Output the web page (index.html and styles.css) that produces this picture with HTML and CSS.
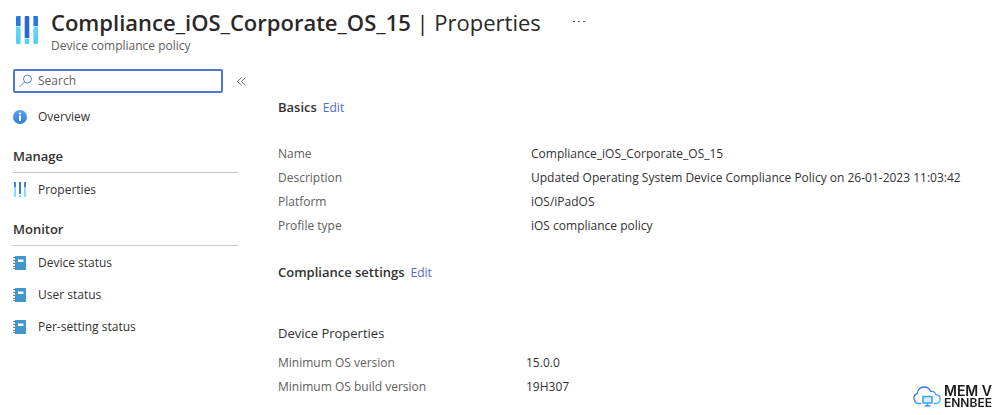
FILE: index.html
```html
<!DOCTYPE html>
<html lang="en">
<head>
<meta charset="utf-8">
<meta name="viewport" content="width=device-width, initial-scale=1">
<title>Compliance_iOS_Corporate_OS_15 | Properties</title>
<link rel="stylesheet" href="styles.css">
</head>
<body>
<svg class="sprite" aria-hidden="true">
  <defs>
    <linearGradient id="cyan" x1="0" y1="0" x2="0" y2="1"><stop offset="0" stop-color="#62d8f5"/><stop offset="1" stop-color="#52cdf2"/></linearGradient>
    <linearGradient id="info" x1="0" y1="0" x2="0" y2="1"><stop offset="0" stop-color="#5ea0ef"/><stop offset="1" stop-color="#2f7de0"/></linearGradient>
    <linearGradient id="cloud" x1="0" y1="0" x2="1" y2="1"><stop offset="0" stop-color="#2f62f0"/><stop offset="1" stop-color="#45b4fa"/></linearGradient>
  </defs>
  <symbol id="bars" viewBox="0 0 22 28">
    <path fill="#2478e0" d="M1 0h3.600v10H0V1a1 1 0 0 1 1-1zM17.400 0H21a1 1 0 0 1 1 1v9h-4.600z"/>
    <path fill="#2c66d4" d="M9.700 0h2.600a1 1 0 0 1 1 1v21H8.700V1a1 1 0 0 1 1-1z"/>
    <path fill="#c5effb" d="M0 10h4.600v1H0zM17.400 10H22v1h-4.600zM8.700 22h4.600v1H8.700z"/>
    <path fill="url(#cyan)" d="M0 11h4.600v16a1 1 0 0 1-1 1H1a1 1 0 0 1-1-1zM17.400 11H22v16a1 1 0 0 1-1 1h-2.600a1 1 0 0 1-1-1zM8.700 23h4.600v4a1 1 0 0 1-1 1H9.700a1 1 0 0 1-1-1z"/>
  </symbol>
  <symbol id="book" viewBox="0 0 14 14">
    <path fill="#3f96cc" d="M2 0h10.500a.5.500 0 0 1 .5.500v13a.5.500 0 0 1-.5.500H2z"/>
    <path fill="#fff" d="M5 3.500h5.500V6H5z"/>
    <path stroke="#6b7f8c" stroke-width="1" d="M0 1.500h3M0 4.500h3M0 7.500h3M0 10.500h3M0 12.500h3"/>
  </symbol>
</svg>

<header class="header">
  <svg class="header-icon" aria-hidden="true"><use href="#bars"/></svg>
  <div>
    <div class="title-row">
      <h1 class="title">Compliance_iOS_Corporate_OS_15 <span class="title-page">| Properties</span></h1>
      <button class="more" type="button" aria-label="More actions">
        <svg class="more-icon" viewBox="0 0 12 2" aria-hidden="true"><path fill="#555" d="M0 0h2v1H0zM5 0h2v1H5zM10 0h2v1h-2z"/></svg>
      </button>
    </div>
    <p class="subtitle">Device compliance policy</p>
  </div>
</header>

<div class="layout">
  <nav class="sidebar" aria-label="Policy menu">
    <div class="search-row">
      <label class="search">
        <svg class="search-icon" viewBox="0 0 14 14" fill="none" stroke="#4f7fdc" aria-hidden="true"><circle cx="8.500" cy="5" r="4"/><path d="M5.600 7.900L1 12.500"/></svg>
        <input class="search-input" type="search" placeholder="Search" aria-label="Search">
      </label>
      <button class="collapse" type="button" aria-label="Collapse menu">
        <svg class="collapse-icon" viewBox="0 0 9 9" fill="none" stroke="#777" aria-hidden="true"><path d="M4.500.5l-4 4 4 4M8.500.5l-4 4 4 4"/></svg>
      </button>
    </div>
    <a class="nav-item" href="#overview">
      <svg class="nav-icon" viewBox="0 0 14 14" aria-hidden="true"><circle cx="7" cy="7" r="7" fill="url(#info)"/><path fill="#fff" d="M6 5.500h2V11H6z"/><circle cx="7" cy="3.500" r="1.100" fill="#fff"/></svg>
      Overview
    </a>
    <h2 class="nav-heading">Manage</h2>
    <a class="nav-item" href="#properties"><svg class="nav-icon bars-small" viewBox="0 0 14 16" aria-hidden="true"><path fill="#3b83dc" d="M1 0h2v5H1zM11 0h2v5h-2z"/><path fill="#3c72d6" d="M6 0h2v12H6z"/><path fill="#7fe0f7" d="M1 5h2v10H1zM6 13h2v2H6zM11 5h2v10h-2z"/></svg>Properties</a>
    <h2 class="nav-heading">Monitor</h2>
    <a class="nav-item" href="#device-status"><svg class="nav-icon" aria-hidden="true"><use href="#book"/></svg>Device status</a>
    <a class="nav-item" href="#user-status"><svg class="nav-icon" aria-hidden="true"><use href="#book"/></svg>User status</a>
    <a class="nav-item" href="#setting-status"><svg class="nav-icon" aria-hidden="true"><use href="#book"/></svg>Per-setting status</a>
  </nav>

  <main class="content">
    <div class="section-head"><h2 class="section-title">Basics</h2><a class="edit" href="#edit-basics">Edit</a></div>
    <dl class="props basics">
      <dt>Name</dt><dd>Compliance_iOS_Corporate_OS_15</dd>
      <dt>Description</dt><dd>Updated Operating System Device Compliance Policy on 26-01-2023 11:03:42</dd>
      <dt>Platform</dt><dd>iOS/iPadOS</dd>
      <dt>Profile type</dt><dd>iOS compliance policy</dd>
    </dl>
    <div class="section-head"><h2 class="section-title">Compliance settings</h2><a class="edit" href="#edit-settings">Edit</a></div>
    <h3 class="group-title">Device Properties</h3>
    <dl class="props settings">
      <dt>Minimum OS version</dt><dd>15.0.0</dd>
      <dt>Minimum OS build version</dt><dd>19H307</dd>
    </dl>
  </main>
</div>

<div class="brand">
  <svg class="brand-icon" viewBox="0 0 28 22" fill="none" aria-hidden="true">
    <path stroke="url(#cloud)" stroke-width="1.300" d="M8 17.500H6.500A5.300 5.300 0 0 1 4.300 7.300C4.500 3.500 7.500 1 11 1c3.200 0 5.600 1.700 6.700 4.500 2-.6 4.300.3 5 2.800 2.700.5 4.500 2.500 4.500 4.800 0 2.600-2 4.400-4.700 4.400H21"/>
    <path fill="#d9efff" stroke="#38a0f8" stroke-width="1.500" d="M10 10.500h9v6.500h-9z"/>
    <path stroke="#38a0f8" stroke-width="1.500" d="M14.500 17v3M11.500 20h6"/>
  </svg>
  <div>
    <div class="brand-top">MEM V</div>
    <div class="brand-bottom">ENNBEE</div>
  </div>
</div>
</body>
</html>
```
FILE: styles.css
```css
* { box-sizing: border-box; }

body {
  margin: 0;
  background: #fff;
  color: #323130;
  font: 12px/24px "Open Sans", "Noto Sans", sans-serif;
}

h1, h2, h3, p, dl, dd { margin: 0; }
a { text-decoration: none; }
button { padding: 0; border: 0; background: none; cursor: pointer; }
svg { display: block; flex: none; }

.sprite { position: absolute; width: 0; height: 0; }

.header { display: flex; gap: 13px; padding: 6px 16px 0; }
.header-icon { width: 22px; height: 28px; margin-top: 10px; }
.title-row { display: flex; align-items: center; gap: 32px; }
.title { font-size: 22px; line-height: 32px; font-weight: 600; color: #292827; }
.title-page { font-weight: 400; }
.more-icon { width: 12px; height: 2px; }
.subtitle { line-height: 16px; color: #605e5c; }

.layout { display: flex; gap: 32px; padding: 15px 16px 16px 13px; }
.sidebar { flex: none; width: 233px; }

.search-row { display: flex; align-items: center; gap: 14px; margin-bottom: 8px; }
.search {
  display: flex;
  flex: 1;
  align-items: center;
  gap: 5px;
  height: 24px;
  padding: 0 4px;
  border: 2px solid #5175cf;
  border-radius: 2px;
}
.search-icon { width: 14px; height: 14px; }
.search-input {
  width: 100%;
  min-width: 0;
  padding: 0;
  border: 0;
  outline: 0;
  background: none;
  color: #323130;
  font: inherit;
  line-height: 20px;
}
.search-input::placeholder { color: #605e5c; opacity: 1; }
.collapse-icon { width: 9px; height: 9px; }

.nav-item {
  display: flex;
  align-items: center;
  gap: 11px;
  height: 32px;
  color: #323130;
}
.nav-icon { width: 14px; height: 14px; }
.bars-small { height: 16px; }
.nav-heading {
  margin: 9px 8px 1px 0;
  padding-bottom: 2px;
  border-bottom: 1px solid #c8c6c4;
  font-size: 13px;
  line-height: 28px;
  font-weight: 600;
}

.content { flex: 1; min-width: 0; padding-top: 26px; }
.section-head { display: flex; align-items: baseline; gap: 6px; }
.section-title { font-size: 13px; line-height: 24px; font-weight: 600; }
.edit { color: #4f6bd8; }
.props { display: grid; }
.props dt { color: #605e5c; }
.basics { grid-template-columns: 253px 1fr; margin: 22px 0; }
.settings { grid-template-columns: 248px 1fr; }
.group-title { margin: 36px 0 6px; font-size: 13px; line-height: 24px; font-weight: 400; }

.brand {
  position: fixed;
  right: 13px;
  bottom: 6px;
  display: flex;
  align-items: center;
  gap: 3px;
  color: #1b1b1b;
  font-family: Inter, sans-serif;
  font-weight: 600;
}
.brand-top { font-size: 14px; line-height: 13px; }
.brand-bottom { font-size: 12px; line-height: 12px; }
.brand-icon { width: 28px; height: 22px; }
```
